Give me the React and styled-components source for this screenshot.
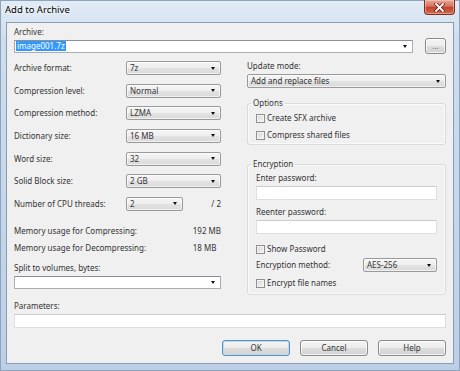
import React from "react";
import styled, { createGlobalStyle } from "styled-components";

const GlobalStyle = createGlobalStyle`
  html, body {
    margin: 0;
    padding: 0;
    background: #ffffff;
  }
  body {
    font-family: "Noto Sans", "Liberation Sans", sans-serif;
    font-size: 8px;
    color: #333333;
  }
`;

const leftRows = [
    { label: "Archive format:", value: "7z" },
    { label: "Compression level:", value: "Normal" },
    { label: "Compression method:", value: "LZMA" },
    { label: "Dictionary size:", value: "16 MB" },
    { label: "Word size:", value: "32" },
    { label: "Solid Block size:", value: "2 GB" },
];

const App = () => {
    return (
        <>
            <GlobalStyle />
            <Window>
                <TitleBar>
                    <Title>Add to Archive</Title>
                    <CloseButton>
                        <svg width="11" height="9" viewBox="0 0 11 9">
                            <path
                                d="M2 1 L9 8 M9 1 L2 8"
                                stroke="#5a1a12"
                                strokeWidth="3.2"
                                strokeLinecap="square"
                            />
                            <path
                                d="M2 1 L9 8 M9 1 L2 8"
                                stroke="#ffffff"
                                strokeWidth="1.8"
                                strokeLinecap="square"
                            />
                        </svg>
                    </CloseButton>
                </TitleBar>

                <Client>
                    <Label>Archive:</Label>
                    <ArchiveRow>
                        <EditCombo $grow>
                            <Selected>image001.7z</Selected>
                            <Arrow />
                        </EditCombo>
                        <Button $w={21} $small>
                            ...
                        </Button>
                    </ArchiveRow>

                    <Columns>
                        <Column>
                            <SettingsGrid>
                                {leftRows.map((row) => (
                                    <React.Fragment key={row.label}>
                                        <Label>{row.label}</Label>
                                        <DropCombo>
                                            <span>{row.value}</span>
                                            <Arrow />
                                        </DropCombo>
                                    </React.Fragment>
                                ))}
                                <Label>Number of CPU threads:</Label>
                                <Split>
                                    <DropCombo $w={57}>
                                        <span>2</span>
                                        <Arrow />
                                    </DropCombo>
                                    <span>/ 2</span>
                                </Split>
                            </SettingsGrid>

                            <MemoryGrid>
                                <span>Memory usage for Compressing:</span>
                                <span>192 MB</span>
                                <span>Memory usage for Decompressing:</span>
                                <span>18 MB</span>
                            </MemoryGrid>

                            <Label $mt={10}>Split to volumes, bytes:</Label>
                            <EditCombo $mt={3}>
                                <span />
                                <Arrow />
                            </EditCombo>
                        </Column>

                        <Column>
                            <Label>Update mode:</Label>
                            <DropCombo $mt={3}>
                                <span>Add and replace files</span>
                                <Arrow />
                            </DropCombo>

                            <Group $mt={10} $pb={4}>
                                <Legend>Options</Legend>
                                <CheckRow $mt={5}>
                                    <Check />
                                    Create SFX archive
                                </CheckRow>
                                <CheckRow $mt={7}>
                                    <Check />
                                    Compress shared files
                                </CheckRow>
                            </Group>

                            <Group $mt={14} $pb={6}>
                                <Legend>Encryption</Legend>
                                <Label $mt={4}>Enter password:</Label>
                                <TextBox $mt={3} />
                                <Label $mt={7}>Reenter password:</Label>
                                <TextBox $mt={3} />
                                <CheckRow $mt={10}>
                                    <Check />
                                    Show Password
                                </CheckRow>
                                <MethodRow>
                                    <span>Encryption method:</span>
                                    <DropCombo $w={74}>
                                        <span>AES-256</span>
                                        <Arrow />
                                    </DropCombo>
                                </MethodRow>
                                <CheckRow $mt={6}>
                                    <Check />
                                    Encrypt file names
                                </CheckRow>
                            </Group>
                        </Column>
                    </Columns>

                    <Label $mt={6}>Parameters:</Label>
                    <TextBox $mt={3} />

                    <ButtonBar>
                        <Button $default>OK</Button>
                        <Button>Cancel</Button>
                        <Button>Help</Button>
                    </ButtonBar>
                </Client>
            </Window>
        </>
    );
};
export default App;

const Window = styled.div`
    width: 460px;
    height: 371px;
    display: flex;
    flex-direction: column;
    box-sizing: border-box;
    background: linear-gradient(
        180deg,
        #e3ecf6 0%,
        #cfdeef 10%,
        #c4d6ec 60%,
        #bccfe6 100%
    );
    box-shadow: inset 0 0 0 1px #8fa3bb;
`;
const TitleBar = styled.div`
    height: 22px;
    display: flex;
    justify-content: space-between;
    align-items: flex-start;
    flex-shrink: 0;
`;
const Title = styled.div`
    margin: 4px 0 0 5px;
    font-size: 9.5px;
    line-height: 11px;
    color: #000;
    text-shadow: 0 0 5px #ffffff, 0 0 3px #ffffff;
`;
const CloseButton = styled.div`
    width: 31px;
    height: 15px;
    margin-right: 5px;
    box-sizing: border-box;
    display: flex;
    align-items: center;
    justify-content: center;
    border: 1px solid #7a2e24;
    border-top: none;
    border-radius: 0 0 4px 4px;
    background: linear-gradient(
        180deg,
        #e7a899 0%,
        #d5735f 45%,
        #c24128 50%,
        #cf6a4f 100%
    );
    box-shadow: inset 0 0 0 1px rgba(255, 210, 200, 0.5);
`;
const Client = styled.div`
    flex: 1;
    margin: 0 6px 7px;
    padding: 4px 7px 0;
    display: flex;
    flex-direction: column;
    background: #f0f0f0;
    border: 1px solid #8a9cb2;
`;
const Label = styled.div`
    height: 10px;
    line-height: 10px;
    white-space: nowrap;
    margin-top: ${(p) => p.$mt || 0}px;
`;
const ArchiveRow = styled.div`
    display: flex;
    align-items: center;
    gap: 12px;
    height: 16px;
    margin-top: 1px;
`;
const EditCombo = styled.div`
    flex: ${(p) => (p.$grow ? "1" : "none")};
    height: 13px;
    box-sizing: border-box;
    margin-top: ${(p) => p.$mt || 0}px;
    display: flex;
    align-items: center;
    justify-content: space-between;
    padding-left: 1px;
    background: #ffffff;
    border: 1px solid #abadb3;
    border-top-color: #8c8f96;
`;
const Selected = styled.span`
    background: #3399ff;
    color: #ffffff;
    padding: 0 1px;
    line-height: 10px;
`;
const Arrow = styled.span`
    width: 0;
    height: 0;
    margin-right: 5px;
    border-left: 2.5px solid transparent;
    border-right: 2.5px solid transparent;
    border-top: 3px solid #111;
`;
const DropCombo = styled.div`
    width: ${(p) => (p.$w ? `${p.$w}px` : "100%")};
    height: 14px;
    box-sizing: border-box;
    margin-top: ${(p) => p.$mt || 0}px;
    display: flex;
    align-items: center;
    justify-content: space-between;
    padding-left: 3px;
    line-height: 10px;
    border: 1px solid #9a9a9a;
    border-radius: 2px;
    background: linear-gradient(
        180deg,
        #f5f5f5 0%,
        #eeeeee 50%,
        #e3e3e3 51%,
        #d9d9d9 100%
    );
    box-shadow: inset 0 0 0 1px rgba(255, 255, 255, 0.6);
`;
const Columns = styled.div`
    display: grid;
    grid-template-columns: 207px 199px;
    column-gap: 26px;
    align-items: start;
    margin-top: 7px;
`;
const Column = styled.div`
    display: flex;
    flex-direction: column;
`;
const SettingsGrid = styled.div`
    display: grid;
    grid-template-columns: 112px 95px;
    grid-auto-rows: 14px;
    row-gap: 8.67px;
    align-items: center;
`;
const Split = styled.div`
    display: flex;
    align-items: center;
    justify-content: space-between;
    line-height: 10px;
`;
const MemoryGrid = styled.div`
    display: grid;
    grid-template-columns: 1fr auto;
    grid-auto-rows: 10px;
    row-gap: 7px;
    line-height: 10px;
    margin-top: 15px;
`;
const Group = styled.fieldset`
    margin: ${(p) => p.$mt || 0}px 0 0;
    padding: 0 8px ${(p) => p.$pb || 0}px;
    min-width: 0;
    display: flex;
    flex-direction: column;
    border: 1px solid #d7dcdf;
    border-radius: 3px;
    box-shadow: inset 0 0 0 1px #fafafa;
`;
const Legend = styled.legend`
    padding: 0 2px;
    margin-left: -5px;
    line-height: 10px;
`;
const CheckRow = styled.div`
    display: flex;
    align-items: center;
    gap: 2px;
    height: 10px;
    line-height: 10px;
    margin-top: ${(p) => p.$mt || 0}px;
`;
const Check = styled.span`
    width: 9px;
    height: 9px;
    box-sizing: border-box;
    border: 1px solid #8f8f8f;
    background: linear-gradient(135deg, #d6d6d6 0%, #f6f6f6 100%);
    box-shadow: inset 0 0 0 1px #f4f4f4;
`;
const TextBox = styled.div`
    height: 14px;
    box-sizing: border-box;
    margin-top: ${(p) => p.$mt || 0}px;
    background: #ffffff;
    border: 1px solid #dcdee2;
    border-top-color: #c9ccd1;
`;
const MethodRow = styled.div`
    display: flex;
    align-items: center;
    justify-content: space-between;
    margin-top: 4px;
    line-height: 10px;
`;
const ButtonBar = styled.div`
    display: flex;
    justify-content: flex-end;
    gap: 10px;
    margin-top: 12px;
`;
const Button = styled.div`
    width: ${(p) => p.$w || 68}px;
    height: 16px;
    box-sizing: border-box;
    display: flex;
    align-items: center;
    justify-content: center;
    line-height: 10px;
    font-size: 8px;
    color: ${(p) => (p.$small ? "#6a6a6a" : "#333333")};
    border: 1px solid ${(p) => (p.$default ? "#5c8fc0" : "#8a8a8a")};
    border-radius: 3px;
    background: linear-gradient(
        180deg,
        #f4f4f4 0%,
        #ececec 50%,
        #dedede 51%,
        #d2d2d2 100%
    );
    box-shadow: inset 0 0 0 1px
        ${(p) => (p.$default ? "#b9dcf3" : "rgba(255, 255, 255, 0.7)")};
`;
